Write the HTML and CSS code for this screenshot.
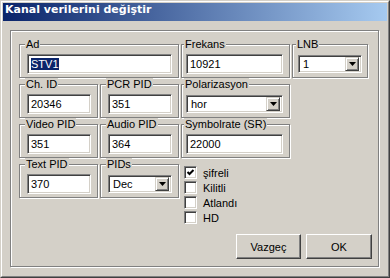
FILE: index.html
```html
<!DOCTYPE html>
<html>
<head>
    <meta charset="UTF-8">
    <title>Kanal verilerini değiştir</title>
    <link rel="stylesheet" href="styles.css">
</head>
<body>
<div class="window">
    <div class="window-inner">
        <div class="titlebar">Kanal verilerini değiştir</div>
        <div class="panel">
            <div class="grid">
                <fieldset class="group span2 pad-l">
                    <legend>Ad</legend>
                    <div class="edit w-ad"><span class="sel">STV1</span></div>
                </fieldset>
                <fieldset class="group pad-c">
                    <legend>Frekans</legend>
                    <div class="edit w-c">10921</div>
                </fieldset>
                <fieldset class="group pad-d">
                    <legend>LNB</legend>
                    <div class="combo w-d">
                        <span class="combo-text">1</span>
                        <span class="drop"><svg width="7" height="4" viewBox="0 0 7 4"><polygon points="0,0 7,0 3.5,4" fill="#000"/></svg></span>
                    </div>
                </fieldset>

                <fieldset class="group pad-l">
                    <legend>Ch. ID</legend>
                    <div class="edit w-a">20346</div>
                </fieldset>
                <fieldset class="group pad-l">
                    <legend>PCR PID</legend>
                    <div class="edit w-a">351</div>
                </fieldset>
                <fieldset class="group pad-c">
                    <legend>Polarizasyon</legend>
                    <div class="combo w-c">
                        <span class="combo-text">hor</span>
                        <span class="drop"><svg width="7" height="4" viewBox="0 0 7 4"><polygon points="0,0 7,0 3.5,4" fill="#000"/></svg></span>
                    </div>
                </fieldset>
                <div></div>

                <fieldset class="group pad-l">
                    <legend>Video PID</legend>
                    <div class="edit w-a">351</div>
                </fieldset>
                <fieldset class="group pad-l">
                    <legend>Audio PID</legend>
                    <div class="edit w-a">364</div>
                </fieldset>
                <fieldset class="group pad-c">
                    <legend>Symbolrate (SR)</legend>
                    <div class="edit w-c">22000</div>
                </fieldset>
                <div></div>

                <fieldset class="group pad-l">
                    <legend>Text PID</legend>
                    <div class="edit w-a">370</div>
                </fieldset>
                <fieldset class="group pad-l">
                    <legend>PIDs</legend>
                    <div class="combo w-a">
                        <span class="combo-text">Dec</span>
                        <span class="drop"><svg width="7" height="4" viewBox="0 0 7 4"><polygon points="0,0 7,0 3.5,4" fill="#000"/></svg></span>
                    </div>
                </fieldset>
                <div class="checks">
                    <div class="check">
                        <span class="box"><svg width="9" height="9" viewBox="0 0 9 9"><polyline points="1.5,4 3.5,6 7.5,2" fill="none" stroke="#000" stroke-width="2"/></svg></span>
                        <span>şifreli</span>
                    </div>
                    <div class="check"><span class="box"></span><span>Kilitli</span></div>
                    <div class="check"><span class="box"></span><span>Atlandı</span></div>
                    <div class="check"><span class="box"></span><span>HD</span></div>
                </div>
            </div>
            <div class="buttons">
                <a class="btn btn-cancel" href="javascript:">Vazgeç</a>
                <a class="btn btn-ok" href="javascript:">OK</a>
            </div>
        </div>
    </div>
</div>
</body>
</html>
```

FILE: styles.css
```css
/* sayfa ve pencere */
html, body {
    margin: 0;
    padding: 0;
    background: #D4D0C8;
}
body {
    font: 11px "Liberation Sans", Arial, sans-serif;
    color: #000;
}
.window {
    width: 390px;
    height: 278px;
    box-sizing: border-box;
    border: 1px solid;
    border-color: #D4D0C8 #404040 #404040 #D4D0C8;
    background: #D4D0C8;
}
.window-inner {
    height: 100%;
    box-sizing: border-box;
    border: 1px solid;
    border-color: #fff #808080 #808080 #fff;
    padding: 1px;
}
/* başlık çubuğu */
.titlebar {
    height: 18px;
    line-height: 18px;
    padding-left: 2px;
    background: linear-gradient(to right, #0A246A, #A6CAF0);
    color: #fff;
    font: bold 11px "DejaVu Sans", Verdana, sans-serif;
    white-space: nowrap;
}
/* ana çerçeve */
.panel {
    width: 369px;
    height: 237px;
    box-sizing: border-box;
    margin: 9px 0 0 7px;
    padding: 7px 6px 7px 8px;
    border: 1px solid #808080;
    box-shadow: inset 1px 1px #fff, 1px 1px #fff;
    display: flex;
    flex-direction: column;
}
.grid {
    display: grid;
    grid-template-columns: 79px 79px 109px 76px;
    grid-auto-rows: 40px;
    column-gap: 2px;
}
/* grup kutuları */
.group {
    margin: 0;
    padding: 3px 4px 3px 7px;
    border: 1px solid #808080;
    box-shadow: inset 1px 1px #fff, 1px 1px #fff;
    min-width: 0;
}
.group legend {
    margin-left: -2px;
    padding: 0 1px;
    line-height: 13px;
    background: #D4D0C8;
}
.span2 { grid-column: span 2; }
.pad-l { padding-left: 7px; }
.pad-c { padding-left: 4px; }
.pad-d { padding-left: 5px; }
/* metin kutuları */
.edit, .combo {
    box-sizing: border-box;
    background: #fff;
    border: 1px solid;
    border-color: #808080 #fff #fff #808080;
    box-shadow: inset 1px 1px #404040, inset -1px -1px #D4D0C8;
    white-space: nowrap;
}
.edit {
    height: 20px;
    line-height: 18px;
    padding-left: 3px;
}
.sel {
    background: #0A246A;
    color: #fff;
}
.combo {
    height: 18px;
    margin-top: 1px;
    padding: 2px 2px 2px 4px;
    display: flex;
    align-items: center;
}
.combo-text {
    flex: 1;
    line-height: 14px;
}
.drop {
    width: 14px;
    height: 14px;
    box-sizing: border-box;
    border: 1px solid;
    border-color: #D4D0C8 #404040 #404040 #D4D0C8;
    box-shadow: inset 1px 1px #fff, inset -1px -1px #808080;
    background: #D4D0C8;
    display: flex;
    align-items: center;
    justify-content: center;
}
.drop svg { display: block; }
.w-ad { width: 145px; }
.w-a { width: 64px; }
.w-c { width: 97px; }
.w-d { width: 64px; }
/* onay kutuları */
.checks {
    grid-column: 3 / 5;
    padding: 7px 0 0 3px;
}
.check {
    display: flex;
    align-items: center;
    height: 15px;
    gap: 6px;
}
.box {
    width: 13px;
    height: 13px;
    box-sizing: border-box;
    background: #fff;
    border: 1px solid;
    border-color: #808080 #fff #fff #808080;
    box-shadow: inset 1px 1px #404040, inset -1px -1px #D4D0C8;
    padding: 1px;
}
.box svg { display: block; }
/* düğmeler */
.buttons {
    margin-top: auto;
    display: flex;
    justify-content: flex-end;
    gap: 5px;
}
.btn {
    height: 25px;
    box-sizing: border-box;
    border: 1px solid;
    border-color: #fff #404040 #404040 #fff;
    box-shadow: inset -1px -1px #808080;
    color: #000;
    text-decoration: none;
    display: flex;
    align-items: center;
    justify-content: center;
}
.btn-cancel { width: 65px; }
.btn-ok { width: 66px; }
```
